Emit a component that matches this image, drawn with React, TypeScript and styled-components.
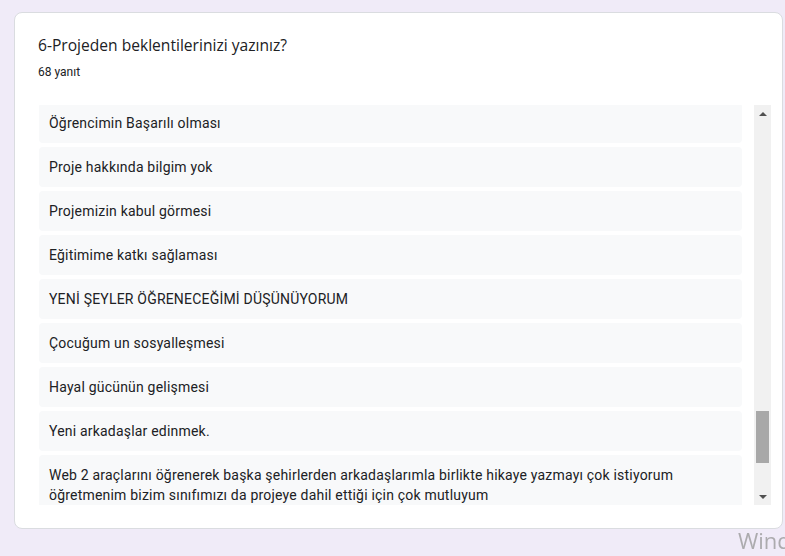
import styled, { createGlobalStyle } from 'styled-components';

const GlobalStyle = createGlobalStyle`
  html, body {
    margin: 0;
    padding: 0;
    background: #f0ebf8;
    overflow: hidden;
  }
  body {
    font-family: Roboto, "Liberation Sans", Arial, sans-serif;
    color: #202124;
  }
`;

const responses = [
  'Öğrencimin Başarılı olması',
  'Proje hakkında bilgim yok',
  'Projemizin kabul görmesi',
  'Eğitimime katkı sağlaması',
  'YENİ ŞEYLER ÖĞRENECEĞİMİ DÜŞÜNÜYORUM',
  'Çocuğum un sosyalleşmesi',
  'Hayal gücünün gelişmesi',
  'Yeni arkadaşlar edinmek.',
  'Web 2 araçlarını öğrenerek başka şehirlerden arkadaşlarımla birlikte hikaye yazmayı çok istiyorum öğretmenim bizim sınıfımızı da projeye dahil ettiği için çok mutluyum',
];

export default function App() {
  return (
    <>
      <GlobalStyle />
      <Page>
        <Card>
          <Title>6-Projeden beklentilerinizi yazınız?</Title>
          <Count>68 yanıt</Count>
          <ListRow>
            <Viewport>
              {/* list is scrolled a couple of pixels into the first visible answer */}
              <AnswerList scrolled={2}>
                {responses.map((r, i) => (
                  <Answer key={i}>{r}</Answer>
                ))}
              </AnswerList>
            </Viewport>
            <ScrollBar>
              <ArrowButton>
                <Arrow dir="up" />
              </ArrowButton>
              <Track>
                <Thumb offset={289} size={52} />
              </Track>
              <ArrowButton>
                <Arrow dir="down" />
              </ArrowButton>
            </ScrollBar>
          </ListRow>
        </Card>
      </Page>
      <Watermark>Windows'u Etkinleştir</Watermark>
    </>
  );
}

const Page = styled.div`
  padding: 12px 2px 0 14px;
  height: 556px;
  box-sizing: border-box;
`;

const Card = styled.div`
  width: 769px;
  height: 517px;
  box-sizing: border-box;
  background: #fff;
  border: 1px solid #dadce0;
  border-radius: 8px;
  padding: 20px 11px 23px 23px;
  display: flex;
  flex-direction: column;
`;

const Title = styled.div`
  font-family: "Open Sans", Roboto, sans-serif;
  font-size: 15.6px;
  line-height: 24px;
  color: #202124;
`;

const Count = styled.div`
  margin-top: 7px;
  font-size: 12px;
  line-height: 16px;
  color: #202124;
`;

const ListRow = styled.div`
  margin-top: 25px;
  display: flex;
  gap: 12px;
  height: 400px;
  margin-left: 1px;
`;

const Viewport = styled.div`
  flex: 1;
  overflow: hidden;
`;

const AnswerList = styled.div<{ scrolled: number }>`
  margin-top: -${p => p.scrolled}px;
  display: flex;
  flex-direction: column;
  gap: 4px;
`;

const Answer = styled.div`
  flex-shrink: 0;
  background: #f8f9fa;
  border-radius: 4px;
  padding: 10px;
  font-size: 14px;
  line-height: 20px;
  letter-spacing: 0.2px;
  color: #202124;
`;

const ScrollBar = styled.div`
  width: 17px;
  flex-shrink: 0;
  background: #f1f1f1;
  display: flex;
  flex-direction: column;
`;

const ArrowButton = styled.div`
  height: 17px;
  display: flex;
  align-items: center;
  justify-content: center;
`;

const Arrow = styled.div<{ dir: 'up' | 'down' }>`
  width: 0;
  height: 0;
  border-left: 4px solid transparent;
  border-right: 4px solid transparent;
  ${p =>
    p.dir === 'up'
      ? 'border-bottom: 4px solid #505050;'
      : 'border-top: 4px solid #505050;'}
`;

const Track = styled.div`
  flex: 1;
  display: flex;
  flex-direction: column;
`;

const Thumb = styled.div<{ offset: number; size: number }>`
  margin: ${p => p.offset}px 2px 0;
  height: ${p => p.size}px;
  background: #a8a8a8;
`;

const Watermark = styled.div`
  position: fixed;
  left: 738px;
  top: 525px;
  font-family: "Open Sans", "DejaVu Sans", sans-serif;
  font-size: 22px;
  line-height: 30px;
  color: rgba(150, 150, 150, 0.75);
  white-space: nowrap;
  pointer-events: none;
`;
